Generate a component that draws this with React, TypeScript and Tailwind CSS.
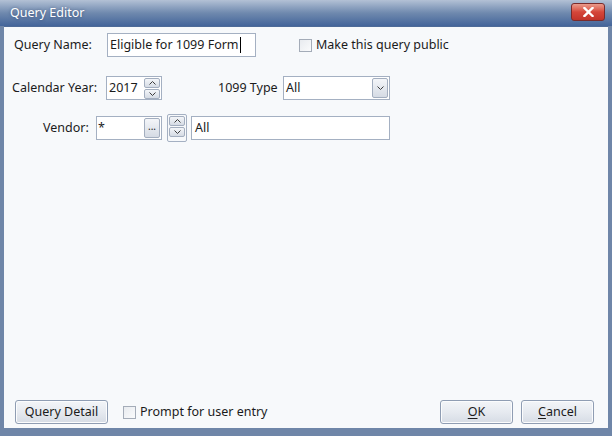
import React from 'react'

const font = { fontFamily: '"Noto Sans", "Open Sans", sans-serif' }

const Chevron = ({ up = false }: { up?: boolean }) => (
  <svg width="7" height="4" viewBox="0 0 7 4" className="block">
    <path d={up ? 'M0.5 3.5 L3.5 0.5 L6.5 3.5' : 'M0.5 0.5 L3.5 3.5 L6.5 0.5'} fill="none" stroke="#3c3c3c" strokeWidth="1" />
  </svg>
)

const SmallBtn = ({ children, className = '' }: { children: React.ReactNode; className?: string }) => (
  <div
    className={`flex items-center justify-center rounded-[2px] border border-[#a3aebf] bg-gradient-to-b from-[#f4f6f9] to-[#d5dbe4] ${className}`}
  >
    {children}
  </div>
)

const Spinner = ({ className = '' }: { className?: string }) => (
  <div className={`flex flex-col gap-px ${className}`}>
    <SmallBtn className="h-[10px] w-[16px]">
      <Chevron up />
    </SmallBtn>
    <SmallBtn className="h-[10px] w-[16px]">
      <Chevron />
    </SmallBtn>
  </div>
)

const Checkbox = () => (
  <div className="h-[13px] w-[13px] border border-[#a4acb8] bg-gradient-to-br from-[#e8ebef] to-[#fafbfc]" />
)

const Button = ({ children, className = '' }: { children: React.ReactNode; className?: string }) => (
  <button
    type="button"
    className={`flex h-[24px] items-center justify-center rounded-[3px] border border-[#8f9db3] bg-gradient-to-b from-[#f3f5f8] via-[#e6eaf0] to-[#d6dce5] text-[12.5px] text-[#1b1b1b] shadow-[inset_0_0_0_1px_#fbfcfd] ${className}`}
  >
    {children}
  </button>
)

export default function App() {
  return (
    <div style={font} className="flex h-[436px] w-[612px] flex-col overflow-hidden bg-[#6f86a8] text-[12.5px] text-[#1b1b1b]">
      {/* Title bar */}
      <div className="flex h-[26px] shrink-0 items-center justify-between bg-gradient-to-b from-[#b3c1d5] via-[#6f89ae] to-[#44659a] pl-[10px] pr-[7px]">
        <span className="text-[12.5px] text-white [text-shadow:0_0_3px_rgba(30,50,90,0.6)]">Query Editor</span>
        <div className="mb-[2px] flex h-[18px] w-[34px] items-center justify-center rounded-[3px] border border-[#7a2b2b] bg-gradient-to-b from-[#e99a8c] via-[#d5463a] to-[#c2332a]">
          <svg width="11" height="10" viewBox="0 0 11 10">
            <path d="M1.5 1 L9.5 9 M9.5 1 L1.5 9" stroke="white" strokeWidth="2.4" strokeLinecap="square" />
          </svg>
        </div>
      </div>

      {/* Client area */}
      <div className="mx-[4px] mb-[8px] flex flex-1 flex-col border-t border-[#4e6b98] bg-[#f7f9fb] px-[10px] pb-[4px]">
        {/* Query name row */}
        <div className="mt-[6px] flex h-[24px] items-center">
          <span className="w-[93px]">Query Name:</span>
          <div className="flex h-[24px] w-[149px] items-center border border-[#a4b0c2] bg-white pl-[2px]">
            <span>Eligible for 1099 Form</span>
            <span className="ml-px h-[16px] w-px bg-black" />
          </div>
          <div className="ml-[43px] flex items-center gap-[4px]">
            <Checkbox />
            <span>Make this query public</span>
          </div>
        </div>

        {/* Calendar year row */}
        <div className="mt-[19px] flex h-[24px] items-center">
          <span className="ml-[-2px] w-[94px]">Calendar Year:</span>
          <div className="flex h-[24px] w-[56px] items-center justify-between border border-[#a4b0c2] bg-white pl-[2px] pr-px">
            <span>2017</span>
            <Spinner />
          </div>
          <span className="ml-[56px] w-[65px]">1099 Type</span>
          <div className="flex h-[24px] w-[107px] items-center justify-between border border-[#a4b0c2] bg-white pl-[2px] pr-px">
            <span>All</span>
            <SmallBtn className="h-[20px] w-[16px]">
              <Chevron />
            </SmallBtn>
          </div>
        </div>

        {/* Vendor row */}
        <div className="mt-[16px] flex h-[24px] items-center">
          <span className="ml-[29px] w-[53px]">Vendor:</span>
          <div className="flex h-[24px] w-[66px] items-center justify-between border border-[#a4b0c2] bg-white pl-px pr-px">
            <span>*</span>
            <SmallBtn className="h-[20px] w-[16px] pb-[5px] text-[10px] leading-none">...</SmallBtn>
          </div>
          <div className="ml-[5px] h-[28px] rounded-[2px] border border-[#a4b0c2] p-px">
            <Spinner className="gap-[2px]" />
          </div>
          <div className="ml-[4px] flex h-[24px] w-[199px] items-center border border-[#a4b0c2] bg-white pl-[3px]">
            All
          </div>
        </div>

        <div className="flex-1" />

        {/* Footer */}
        <div className="flex h-[24px] items-center">
          <Button className="ml-px w-[93px]">Query Detail</Button>
          <div className="ml-[15px] flex items-center gap-[4px]">
            <Checkbox />
            <span>Prompt for user entry</span>
          </div>
          <div className="flex-1" />
          <Button className="w-[73px]">
            <span className="underline underline-offset-2">O</span>K
          </Button>
          <Button className="ml-[8px] mr-[4px] w-[73px]">
            <span className="underline underline-offset-2">C</span>ancel
          </Button>
        </div>
      </div>
    </div>
  )
}
